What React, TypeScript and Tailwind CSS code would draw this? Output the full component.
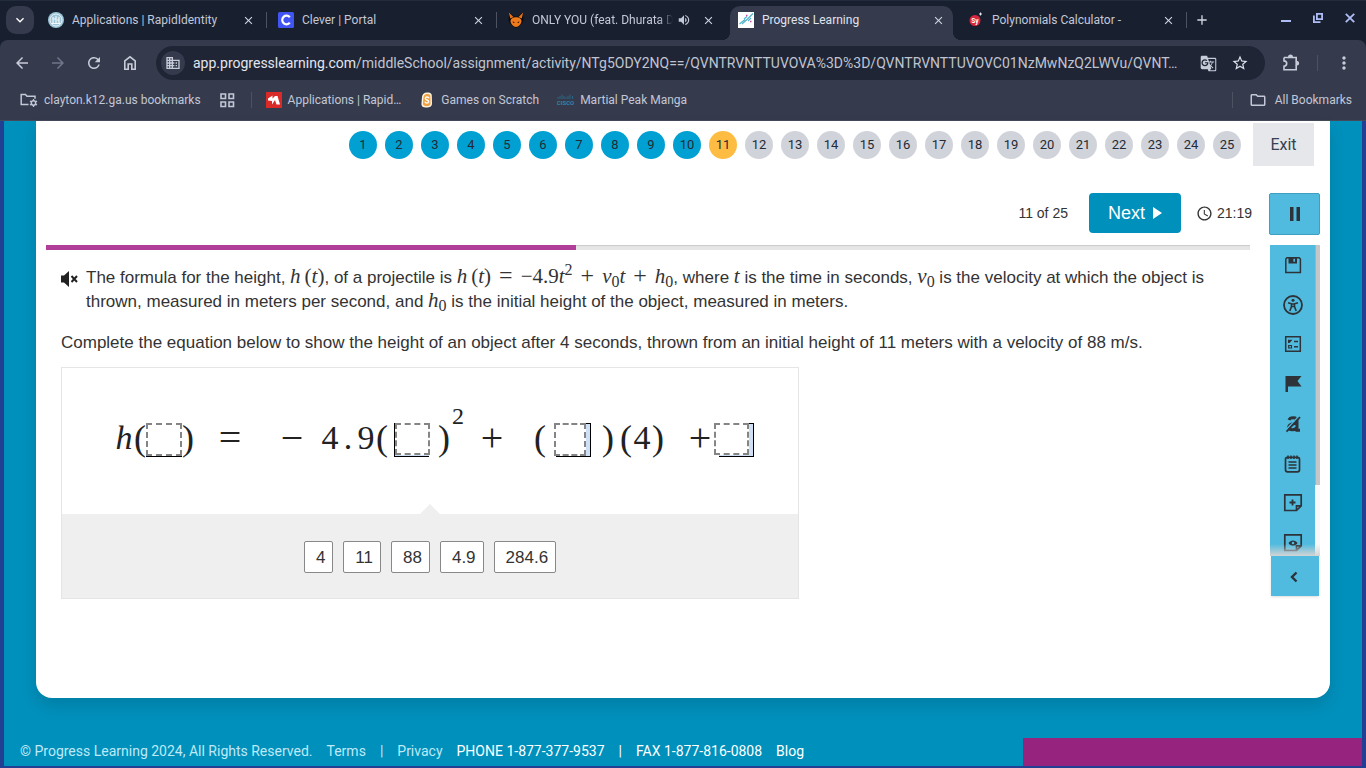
import React from "react";
import {
  MdArrowBack,
  MdArrowForward,
  MdRefresh,
  MdDomain,
  MdGTranslate,
  MdStarBorder,
  MdMoreVert,
  MdVolumeUp,
  MdClose,
  MdAdd,
  MdKeyboardArrowDown,
  MdOutlineFolder,
  MdAccessTime,
} from "react-icons/md";

/* ---------- favicons ---------- */

const RapidIcon = () => (
  <svg viewBox="0 0 16 16" className="size-4 shrink-0" aria-hidden="true">
    <circle cx="8" cy="8" r="8" fill="#9cc3d6" />
    <circle cx="8" cy="8" r="6" fill="none" stroke="#e8f3f8" strokeWidth="1" />
    <path d="M5 11V5M8 12V4M11 11V5M3.500 11.500h9M5 7h2.500M9 8h2.500" stroke="#f2f9fc" strokeWidth="1.200" fill="none" />
  </svg>
);

const CleverIcon = () => (
  <svg viewBox="0 0 16 16" className="size-4 shrink-0" aria-hidden="true">
    <rect width="16" height="16" rx="1.500" fill="#4055f1" />
    <path d="M11.800 5.200A4.300 4.300 0 1 0 11.800 10.800" fill="none" stroke="#fff" strokeWidth="2.200" />
  </svg>
);

const FoxIcon = () => (
  <svg viewBox="0 0 16 16" className="size-4 shrink-0" aria-hidden="true">
    <path d="M1 .5 6 4.500h4L15 .5l.5 8L13 13l-5 3-5-3L.5 8.500z" fill="#0b0a0c" />
    <path d="M.8.5 5.500 5 2.300 6.500zM15.200.5 10.500 5l3.200 1.500z" fill="#e8731a" />
    <path d="M8 5.200c3 0 5.500 1.400 5.500 3.800 0 2.800-2.900 6-5.500 6s-5.500-3.200-5.500-6c0-2.400 2.500-3.800 5.500-3.800z" fill="#ee7a1c" />
    <path d="M4.500 9.300 7 10.500 5.300 11zM11.500 9.300 9 10.500l1.700.5z" fill="#1b1110" />
  </svg>
);

const ProgressIcon = () => (
  <svg viewBox="0 0 16 16" className="size-4 shrink-0" aria-hidden="true">
    <rect width="16" height="16" fill="#fff" />
    <path d="M1.500 12 7 7.500M4 12l5-4.500M8 8.500 15 1.500M10 9l3-3M6 7l3-2.500" stroke="#4fb4cb" strokeWidth="1.100" fill="none" />
    <path d="M8 3.500h1.500M12 9.500h1.500" stroke="#cf4d96" strokeWidth="1.500" />
  </svg>
);

const SymbolabIcon = () => (
  <svg viewBox="0 0 16 16" className="size-4 shrink-0" aria-hidden="true">
    <circle cx="7" cy="8.500" r="5.500" fill="#d8263f" />
    <path d="M12.500.5v3M11 2h3" stroke="#e6e6ee" strokeWidth="1" />
    <text x="7" y="10.500" textAnchor="middle" fontSize="6.500" fontWeight="700" fill="#fff" fontFamily="Roboto, sans-serif">Sy</text>
  </svg>
);

const RedIcon = () => (
  <svg viewBox="0 0 16 16" className="size-4 shrink-0" aria-hidden="true">
    <rect width="16" height="16" fill="#da2a28" />
    <path d="M2 6.500 6.500 3.500v3L9 4h2.500L14 12.500H10.500L9 8 6 12.500V9L2 8.500z" fill="#fff" />
  </svg>
);

const ScratchIcon = () => (
  <svg viewBox="0 0 16 16" className="size-4 shrink-0" aria-hidden="true">
    <path d="M8 .5c3-.5 5 .8 4.800 3.500L13 12c-.5 3-3 3.800-6 3.500C3.500 15.500 2 14 2.500 11L3 5C3.500 2 5 .5 8 .5z" fill="#fff3df" />
    <path d="M8 2c2.500-.3 3.600.8 3.400 3l.2 6.500C11.200 13.800 9.500 14.200 7 14c-2.300 0-3.300-1-3-3l.5-6C5 3 6 2 8 2z" fill="#f0a03c" />
    <path d="M10 6.200C9.500 4.500 6.300 4.600 6.300 6.400 6.300 8.300 9.800 7.700 9.700 9.700 9.500 11.600 6.200 11.500 6 9.700" fill="none" stroke="#fff" strokeWidth="1.400" />
  </svg>
);

const CiscoIcon = () => (
  <svg viewBox="0 0 17 16" className="h-4 w-[17px] shrink-0" aria-hidden="true">
    <path d="M1 5v2M3 4v3M5 2.500V7M7 4v3M9 5v2M11 4v3M13 2.500V7M15.500 4v3" stroke="#2c6682" strokeWidth="1" />
    <text x="8.500" y="13" textAnchor="middle" fontSize="6" fontWeight="700" fill="#2c86a8" fontFamily="Roboto, sans-serif">CISCO</text>
  </svg>
);

/* ---------- browser chrome ---------- */

type TabData = { title: string; icon: React.ReactNode; active?: boolean; audio?: boolean; sep?: boolean };

const tabs: TabData[] = [
  { title: "Applications | RapidIdentity", icon: <RapidIcon />, sep: true },
  { title: "Clever | Portal", icon: <CleverIcon />, sep: true },
  { title: "ONLY YOU (feat. Dhurata D", icon: <FoxIcon />, audio: true },
  { title: "Progress Learning", icon: <ProgressIcon />, active: true },
  { title: "Polynomials Calculator -", icon: <SymbolabIcon />, sep: true },
];

const Sep = ({ className = "" }: { className?: string }) => (
  <span className={"h-4 w-px shrink-0 bg-[#4d5263] " + className} />
);

function Tab({ title, icon, active, audio, sep }: TabData) {
  return (
    <div className="flex max-w-[230px] flex-1 items-end">
      <div className={"relative flex h-[34px] min-w-0 flex-1 items-center gap-2 rounded-t-[10px] pb-[6px] pl-2 " + (active ? "bg-[#353b4d]" : "")}>
        {active && (
          <>
            <span className="absolute bottom-0 -left-2 size-2 bg-[radial-gradient(circle_at_0_0,#182030_8px,#353b4d_8px)]" />
            <span className="absolute -right-2 bottom-0 size-2 bg-[radial-gradient(circle_at_100%_0,#182030_8px,#353b4d_8px)]" />
          </>
        )}
        {icon}
        <span className={"min-w-0 flex-1 overflow-hidden whitespace-nowrap " + (active ? "text-[#e0e3ee]" : "text-[#c3c7d6]") + (audio ? " [mask-image:linear-gradient(to_right,#000_90%,transparent)]" : "")}>
          {title}
        </span>
        {audio && <MdVolumeUp className="-ml-1 mr-[2px] size-[14px] shrink-0 text-[#c3c7d6]" />}
        <button type="button" aria-label={"Close " + title} className="mr-2 flex size-[14px] shrink-0 items-center justify-center text-[#d3d6e2]">
          <MdClose className="size-[13px]" />
        </button>
      </div>
      <div className="flex w-[7px] shrink-0 justify-center pb-3">{sep && <Sep />}</div>
    </div>
  );
}

function NavButton({ label, children, dim }: { label: string; children: React.ReactNode; dim?: boolean }) {
  return (
    <button type="button" aria-label={label} className={"flex size-9 shrink-0 items-center justify-center " + (dim ? "text-[#70768a]" : "text-[#c8ccd9]")}>
      {children}
    </button>
  );
}

function Browser() {
  return (
    <header className="bg-[#182030] font-[Roboto,sans-serif] text-xs text-[#c3c7d6]">
      <div className="flex h-10 items-end border-t border-[#222c3c] pl-[6px]">
        <button type="button" aria-label="Search tabs" className="mr-[6px] mb-[6px] flex size-7 shrink-0 items-center justify-center rounded-[10px] bg-[#353b4d] text-white">
          <MdKeyboardArrowDown className="size-4" />
        </button>
        {tabs.map((t) => (
          <Tab key={t.title} {...t} />
        ))}
        <button type="button" aria-label="New tab" className="mb-3 ml-1 flex size-4 shrink-0 items-center justify-center text-[#d3d6e2]">
          <MdAdd className="size-4" />
        </button>
        <div className="mr-[11px] mb-[17px] ml-auto flex shrink-0 items-center gap-[22px] text-[#aebdf5]">
          <button type="button" aria-label="Minimize">
            <svg viewBox="0 0 10 10" className="size-[10px]"><path d="M0 8h10" stroke="currentColor" strokeWidth="2" /></svg>
          </button>
          <button type="button" aria-label="Restore">
            <svg viewBox="0 0 10 10" className="size-[10px]"><path d="M3.900.9h5.200v5.200H3.900zM.9 2.500v6.600H7.500" fill="none" stroke="currentColor" strokeWidth="1.800" /></svg>
          </button>
          <button type="button" aria-label="Close window">
            <svg viewBox="0 0 10 10" className="size-[10px]"><path d="M.8.8l8.400 8.400M9.200.8.8 9.200" stroke="currentColor" strokeWidth="1.800" /></svg>
          </button>
        </div>
      </div>

      <div className="rounded-t-lg border-b border-[#444a59] bg-[#353b4d]">
        <div className="flex h-[46px] items-center px-1">
          <NavButton label="Back"><MdArrowBack className="size-[18px]" /></NavButton>
          <NavButton label="Forward" dim><MdArrowForward className="size-[18px]" /></NavButton>
          <NavButton label="Reload"><MdRefresh className="size-[18px]" /></NavButton>
          <NavButton label="Home">
            <svg viewBox="0 0 14 16" className="h-4 w-[14px]">
              <path d="M1.800 14.200V6L7 1.800 12.200 6v8.200H8.800V9H5.200v5.200z" fill="none" stroke="currentColor" strokeWidth="1.600" />
            </svg>
          </NavButton>
          <div className="mr-2 ml-2 flex h-[34px] min-w-0 flex-1 items-center rounded-full bg-[#1f2535] pr-4 pl-[5px]">
            <button type="button" aria-label="View site information" className="mr-2 flex size-6 shrink-0 items-center justify-center rounded-full bg-[#353b4d] text-[#c8ccd9]">
              <MdDomain className="size-4" />
            </button>
            <div className="min-w-0 flex-1 truncate text-sm text-[#c0c4d0]">
              <span className="text-[#e3e5ee]">app.progresslearning.com</span>/middleSchool/assignment/activity/NTg5ODY2NQ==/QVNTRVNTTUVOVA%3D%3D/QVNTRVNTTUVOVC01NzMwNzQ2LWVu/QVNT…
            </div>
            <button type="button" aria-label="Translate" className="ml-4 text-[#c8ccd9]"><MdGTranslate className="size-[17px]" /></button>
            <button type="button" aria-label="Bookmark" className="ml-[14px] text-[#dfe2ec]"><MdStarBorder className="size-[18px]" /></button>
          </div>
          <NavButton label="Extensions">
            <svg viewBox="0 0 18 18" className="size-[18px]">
              <path d="M2 3.500h4.500M10.500 3.500h3.700v3.700M14.200 11.200v4.500H2v-3.500c3.600-.3 3.600-5 0-5.300V3.500" fill="none" stroke="currentColor" strokeWidth="1.600" />
              <path d="M6 4.300V3a2.500 2.500 0 0 1 5 0v1.300zM13.400 6.700h1.300a2.500 2.500 0 0 1 0 5h-1.300z" fill="currentColor" />
            </svg>
          </NavButton>
          <Sep className="mx-2" />
          <NavButton label="Menu"><MdMoreVert className="size-5" /></NavButton>
        </div>
        <nav className="flex h-[34px] items-center gap-[18px] pr-[14px] pb-[6px] pl-5">
          <a href="#" className="flex items-center gap-[6px]">
            <svg viewBox="0 0 18 16" className="h-4 w-[18px]">
              <path d="M8.500 12.500H1.200V2.500h4.300l1.500 1.800h8v2.500" fill="none" stroke="currentColor" strokeWidth="1.500" />
              <circle cx="13.500" cy="11" r="2.200" fill="none" stroke="currentColor" strokeWidth="1.500" />
              <path d="M13.500 7v1.800M13.500 13.200V15M10 9l1.600.9M15.400 12.100l1.600.9M10 13l1.600-.9M15.400 9.900 17 9" stroke="currentColor" strokeWidth="1.300" />
            </svg>
            clayton.k12.ga.us bookmarks
          </a>
          <button type="button" aria-label="Apps">
            <svg viewBox="0 0 16 16" className="size-4"><path d="M2 2h4.500v4.500H2zM10 2h4.500v4.500H10zM2 10h4.500v4.500H2zM10 10h4.500v4.500H10z" fill="none" stroke="currentColor" strokeWidth="1.600" /></svg>
          </button>
          <Sep className="-mr-1 -ml-[2px]" />
          <a href="#" className="flex items-center gap-[6px]"><RedIcon />Applications | Rapid…</a>
          <a href="#" className="flex items-center gap-[6px]"><ScratchIcon />Games on Scratch</a>
          <a href="#" className="flex items-center gap-[6px]"><CiscoIcon />Martial Peak Manga</a>
          <Sep className="-mr-[2px] ml-auto" />
          <a href="#" className="flex items-center gap-2"><MdOutlineFolder className="size-[18px]" />All Bookmarks</a>
        </nav>
      </div>
    </header>
  );
}

/* ---------- question ---------- */

const math = "font-['Liberation_Serif',serif] text-[21px] leading-none whitespace-nowrap";

const V = ({ children }: { children: React.ReactNode }) => <i>{children}</i>;
const Sub = ({ children }: { children: React.ReactNode }) => <sub className="text-[16px]">{children}</sub>;
const Op = ({ children }: { children: React.ReactNode }) => <span className="mx-2 text-[24px] leading-[0px]">{children}</span>;
const HofT = () => (
  <>
    <V>h</V>
    <span className="ml-1">(</span>
    <V>t</V>)
  </>
);

function Token({ w, children }: { w: string; children: React.ReactNode }) {
  return <span className={"flex shrink-0 justify-center " + w}>{children}</span>;
}

const Paren = ({ children }: { children: React.ReactNode }) => (
  <span className="flex w-3 shrink-0 justify-center pb-1 text-[36px]">{children}</span>
);

function Slot({ label, slot, drop }: { label: string; slot: string; drop: string }) {
  return (
    <button type="button" aria-label={label} className="relative h-[34px] w-9 shrink-0">
      <span className={"absolute border-black bg-[#cfe0f5] " + slot} />
      <span className={"absolute border-2 border-dashed border-[#858585] bg-white " + drop} />
    </button>
  );
}

function Equation() {
  return (
    <div className="mb-[2px] flex h-36 items-center pl-[52px] font-['Liberation_Serif',serif] text-[34px] leading-[34px] text-[#222]">
      <Token w="w-5 pb-1"><i>h</i></Token>
      <Paren>(</Paren>
      <Slot label="Blank 1" slot="inset-x-0 bottom-0 h-4 border-b" drop="inset-x-0 top-0 h-[33px]" />
      <Paren>)</Paren>
      <Token w="ml-6 w-6 pb-1 text-[40px]">=</Token>
      <Token w="ml-[38px] w-6 pb-1 text-[40px]">−</Token>
      <Token w="ml-4 w-5 pb-1">4</Token>
      <Token w="w-4 pb-1">.</Token>
      <Token w="w-5 pb-1">9</Token>
      <Paren>(</Paren>
      <span className="w-[6px]" />
      <Slot label="Blank 2" slot="left-0 top-0 h-[34px] w-[35px] border-b border-l" drop="left-px top-0 h-8 w-[35px]" />
      <span className="w-2" />
      <Paren>)</Paren>
      <Token w="ml-[2px] w-3 pb-12 text-[24px]">2</Token>
      <Token w="ml-4 w-6 pb-1 text-[40px]">+</Token>
      <span className="w-[30px]" />
      <Paren>(</Paren>
      <span className="w-2" />
      <Slot label="Blank 3" slot="left-[2px] top-0 h-[34px] w-[35px] border-t border-r border-b" drop="left-0 top-0 h-[33px] w-8" />
      <span className="w-3" />
      <Paren>)</Paren>
      <span className="w-[6px]" />
      <Paren>(</Paren>
      <Token w="w-5 pb-1">4</Token>
      <Paren>)</Paren>
      <Token w="ml-6 w-6 pb-1 text-[40px]">+</Token>
      <span className="w-[2px]" />
      <Slot label="Blank 4" slot="left-[5px] top-0 h-[34px] w-[35px] border-t border-r border-b" drop="left-0 top-0 h-8 w-[35px]" />
    </div>
  );
}

const answers = ["4", "11", "88", "4.9", "284.6"];

function Question() {
  return (
    <div className="px-[15px] pt-4 text-[17px] leading-6 text-[#333]">
      <div className="flex">
        <button type="button" aria-label="Read aloud" className="mt-1 mr-2 h-[17px] w-[17px] shrink-0">
          <svg viewBox="0 0 17 17" className="size-[17px]">
            <path d="M0 5.500h3L8 1v16l-5-4.500H0z" fill="#222" />
            <path d="M10.500 6l5.500 6M16 6l-5.500 6" stroke="#222" strokeWidth="2" />
          </svg>
        </button>
        <p>
          The formula for the height, <span className={math}><HofT /></span>, of a projectile is{" "}
          <span className={math}>
            <HofT /><Op>=</Op>−4.9<V>t</V><sup className="text-[16px]">2</sup><Op>+</Op><V>v</V><Sub>0</Sub><V>t</V><Op>+</Op><V>h</V><Sub>0</Sub>
          </span>
          , where <span className={math}><V>t</V></span> is the time in seconds, <span className={math}><V>v</V><Sub>0</Sub></span> is the velocity at which the object is thrown, measured in meters per second, and{" "}
          <span className={math}><V>h</V><Sub>0</Sub></span> is the initial height of the object, measured in meters.
        </p>
      </div>
      <p className="mt-[17px]">
        Complete the equation below to show the height of an object after 4 seconds, thrown from an initial height of 11 meters with a velocity of 88 m/s.
      </p>
      <div className="mt-3 w-[738px] border border-[#e5e5e5]">
        <Equation />
        <div className="relative flex justify-center gap-[10px] bg-[#efefef] pt-[27px] pb-[25px]">
          <span className="absolute -top-[10px] left-1/2 size-0 -translate-x-1/2 border-x-[10px] border-b-[10px] border-x-transparent border-b-[#efefef]" />
          {answers.map((a) => (
            <button key={a} type="button" className="h-8 rounded-[2px] border border-[#888] bg-white pt-[2px] pr-[7px] pl-[11px] leading-7">
              {a}
            </button>
          ))}
        </div>
      </div>
    </div>
  );
}

/* ---------- tool rail ---------- */

const tools: { label: string; icon: React.ReactNode }[] = [
  {
    label: "Save",
    icon: (
      <>
        <path d="M4 2.800h12.200l1.200 1.200v13.400H2.800V4z" fill="none" stroke="currentColor" strokeWidth="1.500" />
        <path d="M5.500 2.500h8.500v6h-8.500z" fill="currentColor" />
        <path d="M11.200 3.700v3" stroke="#50bbdf" strokeWidth="1.600" />
      </>
    ),
  },
  {
    label: "Accessibility",
    icon: (
      <>
        <circle cx="10" cy="10" r="9" fill="none" stroke="currentColor" strokeWidth="1.800" />
        <circle cx="10" cy="5.200" r="1.500" fill="currentColor" />
        <path d="M5 7.800l3.500 1v2.700L6.800 16M15 7.800l-3.500 1v2.700l1.700 4.500M8.500 9h3M8.700 11.500h2.600" fill="none" stroke="currentColor" strokeWidth="1.600" />
      </>
    ),
  },
  {
    label: "Answer masking",
    icon: (
      <>
        <path d="M2.700 2.700h14.600v14.600H2.700z" fill="none" stroke="currentColor" strokeWidth="1.500" />
        <path d="M11 7.500h4M11 12.700h4" stroke="currentColor" strokeWidth="1.500" />
        <path d="M5 5.800h4.500L6.500 9H5z" fill="currentColor" />
        <path d="M5.700 11.500h2.800V14H5.700z" fill="none" stroke="currentColor" strokeWidth="1.200" />
      </>
    ),
  },
  { label: "Flag", icon: <path d="M2.500 2h16l-4 5 4 5.500H5v5.500H2.500z" fill="currentColor" /> },
  {
    label: "Eliminate answers",
    icon: (
      <>
        <path d="M6 6C7 3 14 2.500 14 7v9.300h3M14 9.500C9 9 5.500 11 5.800 13.500c.5 3 5.700 3.300 8.200 0" fill="none" stroke="currentColor" strokeWidth="3" />
        <path d="M2.500 16.500 15.500 2.500" stroke="#50bbdf" strokeWidth="1.500" />
        <path d="M3.500 17.700 17 3.200" stroke="currentColor" strokeWidth="1.700" />
      </>
    ),
  },
  {
    label: "Notepad",
    icon: (
      <>
        <rect x="2.500" y="3.300" width="14" height="14.500" rx="2" fill="none" stroke="currentColor" strokeWidth="1.700" />
        <path d="M5 1.500v3.500M8 1.500v3.500M11 1.500v3.500M14 1.500v3.500M5.500 8h8M5.500 11h8M5.500 14h8" stroke="currentColor" strokeWidth="1.500" />
      </>
    ),
  },
  {
    label: "Add sticky note",
    icon: (
      <>
        <path d="M1.800 1.800h16.400v11l-4.700 4.700H1.800zM18.200 12.800h-4.700v4.700" fill="none" stroke="currentColor" strokeWidth="1.700" />
        <path d="M9.500 6.500v6M6.500 9.500h6" stroke="currentColor" strokeWidth="1.800" />
      </>
    ),
  },
  {
    label: "Show sticky notes",
    icon: (
      <>
        <path d="M1.800 1.800h16.400v11l-4.700 4.700H1.800zM18.200 12.800h-4.700v4.700" fill="none" stroke="currentColor" strokeWidth="1.700" />
        <path d="M5.500 10c2-3.500 7-3.500 9 0-2 3.500-7 3.500-9 0z" fill="currentColor" />
        <circle cx="10" cy="10" r="1.300" fill="#50bbdf" />
      </>
    ),
  },
];

function ToolRail() {
  return (
    <aside className="w-[50px] shrink-0 text-[#2d3338]">
      <div className="relative flex h-[311px] overflow-hidden">
        <ul className="flex h-[318px] flex-1 flex-col bg-[#50bbdf]">
          {tools.map((t) => (
            <li key={t.label} className="flex flex-1 items-center justify-center">
              <button type="button" aria-label={t.label}>
                <svg viewBox="0 0 20 20" className="size-5">{t.icon}</svg>
              </button>
            </li>
          ))}
        </ul>
        <div className="w-[5px] bg-[#f8f8f8]">
          <div className="h-60 border-l border-[#9fb4bd] bg-[#c6c6c6]" />
        </div>
        <div className="absolute inset-x-0 bottom-0 h-3 bg-linear-to-b from-transparent to-[#d4d4d4]" />
      </div>
      <button type="button" aria-label="Collapse toolbar" className="mx-auto flex h-10 w-12 items-center justify-center bg-[#50bbdf] pt-[2px] pr-[2px] shadow-sm">
        <svg viewBox="0 0 10 12" className="h-3 w-[10px]"><path d="M7.500 1.500 3 6l4.500 4.500" fill="none" stroke="currentColor" strokeWidth="2.400" /></svg>
      </button>
    </aside>
  );
}

/* ---------- page ---------- */

function Steps() {
  const current = 11;
  return (
    <div className="mt-[2px] flex h-[43px] items-center justify-end gap-3 pr-4 font-[Roboto,sans-serif]">
      <ol className="flex gap-2">
        {Array.from({ length: 25 }, (_, i) => i + 1).map((n) => (
          <li key={n}>
            <button
              type="button"
              className={"flex size-7 items-center justify-center rounded-full text-[13px] text-[#222b36] " + (n < current ? "bg-[#00a0d2]" : n === current ? "bg-[#ffbc42]" : "bg-[#d1d3db]")}
            >
              {n}
            </button>
          </li>
        ))}
      </ol>
      <button type="button" className="h-[43px] w-[61px] bg-[#e5e7eb] text-base text-[#374151]">Exit</button>
    </div>
  );
}

export default function App() {
  return (
    <div className="flex min-h-screen flex-col bg-[#0090bc]">
      <Browser />
      <div className="flex flex-1 flex-col border-x-4 border-b-2 border-[#233f94] font-['Liberation_Sans',sans-serif]">
        <main className="mx-8 flex-1 rounded-b-2xl bg-white shadow-[0_8px_16px_rgba(0,0,0,0.12)]">
          <Steps />
          <div className="mt-[27px] flex items-start justify-end pr-[10px] text-sm text-[#333]">
            <span className="leading-10">11 of 25</span>
            <button type="button" className="ml-[21px] flex h-10 w-[92px] items-center justify-center gap-2 rounded bg-[#0090bc] text-lg text-white">
              Next
              <svg viewBox="0 0 9 12" className="h-3 w-[9px]"><path d="M0 0l9 6-9 6z" fill="currentColor" /></svg>
            </button>
            <span className="ml-[15px] flex h-10 items-center gap-1"><MdAccessTime className="size-[17px]" />21:19</span>
            <button type="button" aria-label="Pause" className="ml-[17px] flex h-[42px] w-[51px] items-center justify-center rounded-[2px] border border-[#3f9fc0] bg-[#50bbdf]">
              <svg viewBox="0 0 12 14" className="h-[14px] w-3"><path d="M1 0h3.500v14H1zM7.500 0H11v14H7.500z" fill="#2d3338" /></svg>
            </button>
          </div>
          <div className="mt-[10px] flex gap-5 px-[10px]">
            <section className="min-w-0 flex-1">
              <div className="h-[5px] bg-[#e6e6e6] shadow-[inset_0_1px_1px_rgba(0,0,0,0.12)]">
                <div className="h-full w-[44%] bg-[#b13f9a]" />
              </div>
              <Question />
            </section>
            <ToolRail />
          </div>
        </main>
        <footer className="flex h-[68px] shrink-0 items-end justify-between pl-4 font-[Roboto,sans-serif] text-sm text-[#bfe9f7]">
          <div className="flex gap-[14px] pb-[5px]">
            <span>© Progress Learning 2024, All Rights Reserved.</span>
            <a href="#">Terms</a>
            <span>|</span>
            <a href="#">Privacy</a>
            <a href="#" className="text-white">PHONE 1-877-377-9537</a>
            <span className="text-white">|</span>
            <span className="text-white">FAX 1-877-816-0808</span>
            <a href="#" className="text-white">Blog</a>
          </div>
          <div className="h-7 w-[339px] bg-[#96247f]" />
        </footer>
      </div>
    </div>
  );
}
